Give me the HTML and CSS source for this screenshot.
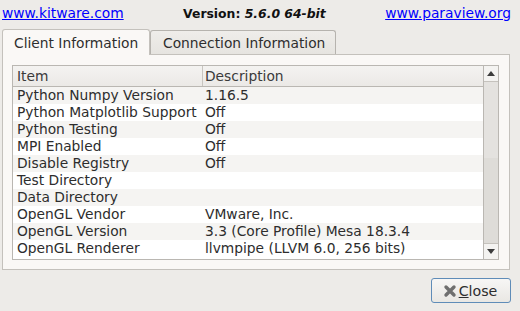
FILE: index.html
```html
<!DOCTYPE html>
<html lang="en">

<head>
    <meta charset="UTF-8">
    <meta name="viewport" content="width=device-width, initial-scale=1.0">
    <title>About ParaView</title>
    <link rel="stylesheet" href="styles.css">
</head>

<body>
    <div class="top-bar">
        <a href="#" class="link">www.kitware.com</a>
        <span class="version">Version: <em>5.6.0 64-bit</em></span>
        <a href="#" class="link">www.paraview.org</a>
    </div>

    <div class="tabs">
        <div class="tab active">Client Information</div>
        <div class="tab">Connection Information</div>
    </div>

    <div class="panel">
        <div class="info-table">
            <div class="table-main">
                <div class="row header">
                    <div class="cell item">Item</div>
                    <div class="cell desc">Description</div>
                </div>
                <div class="row alt"><div class="cell item">Python Numpy Version</div><div class="cell desc">1.16.5</div></div>
                <div class="row"><div class="cell item">Python Matplotlib Support</div><div class="cell desc">Off</div></div>
                <div class="row alt"><div class="cell item">Python Testing</div><div class="cell desc">Off</div></div>
                <div class="row"><div class="cell item">MPI Enabled</div><div class="cell desc">Off</div></div>
                <div class="row alt"><div class="cell item">Disable Registry</div><div class="cell desc">Off</div></div>
                <div class="row"><div class="cell item">Test Directory</div><div class="cell desc"></div></div>
                <div class="row alt"><div class="cell item">Data Directory</div><div class="cell desc"></div></div>
                <div class="row"><div class="cell item">OpenGL Vendor</div><div class="cell desc">VMware, Inc.</div></div>
                <div class="row alt"><div class="cell item">OpenGL Version</div><div class="cell desc">3.3 (Core Profile) Mesa 18.3.4</div></div>
                <div class="row"><div class="cell item">OpenGL Renderer</div><div class="cell desc">llvmpipe (LLVM 6.0, 256 bits)</div></div>
            </div>
            <div class="scrollbar">
                <div class="scroll-btn"><span class="arrow up"></span></div>
                <div class="trough"><div class="thumb"></div></div>
                <div class="scroll-btn"><span class="arrow down"></span></div>
            </div>
        </div>
    </div>

    <div class="button-row">
        <button class="close-btn">
            <svg width="14" height="14" viewBox="0 0 14 14">
                <path d="M3 3 L11 11 M11 3 L3 11" stroke="#6f6f6f" stroke-width="3.4" stroke-linecap="round"/>
            </svg>
            <span><u>C</u>lose</span>
        </button>
    </div>
</body>

</html>
```

FILE: styles.css
```css
body {
    font-family: 'DejaVu Sans', 'Open Sans', sans-serif;
    font-size: 13.8px;
    background-color: #edebe8;
    color: #3c3c3c;
    margin: 0;
    padding: 0;
    width: 520px;
    height: 311px;
    overflow: hidden;
}

.top-bar {
    display: flex;
    justify-content: space-between;
    align-items: center;
    height: 26px;
    padding: 0 9px 0 2px;
}

.link {
    color: #0000ff;
    text-decoration: underline;
}

.version {
    font-weight: bold;
    font-size: 12.4px;
    color: #111;
}

.version em {
    font-style: italic;
}

.tabs {
    display: flex;
    align-items: flex-end;
    padding-left: 2px;
    height: 28px;
}

.tab {
    box-sizing: border-box;
    height: 24px;
    display: flex;
    align-items: center;
    border: 1px solid #b6b3ae;
    border-bottom: none;
    border-radius: 3px 3px 0 0;
    background: linear-gradient(#efedea, #e6e4e0);
    color: #2e2e2e;
}

.tab.active {
    height: 26px;
    width: 148px;
    padding-left: 11px;
    background-color: #faf8f6;
    background-image: none;
    margin-bottom: -1px;
    position: relative;
    z-index: 1;
    border-color: #c4c1bc;
}

.tab:not(.active) {
    width: 186px;
    padding-left: 12px;
}

.panel {
    box-sizing: border-box;
    margin-left: 2px;
    width: 508px;
    height: 216px;
    background-color: #faf8f6;
    border: 1px solid #c4c1bc;
    padding: 10px 10px 0 9px;
}

.info-table {
    box-sizing: border-box;
    display: flex;
    height: 195px;
    border: 1px solid #bab7b2;
    background-color: #ffffff;
}

.table-main {
    flex: 1;
}

.row {
    display: flex;
    height: 17px;
    line-height: 17px;
    align-items: center;
    color: #2d2d2d;
}

.row.alt {
    background-color: #f5f4f2;
}

.row.header {
    height: 20px;
    line-height: 20px;
    border-bottom: 1px solid #bab7b2;
    background: linear-gradient(#f4f3f1, #ebe9e6);
    color: #3a3a3a;
}

.cell {
    white-space: nowrap;
}

.item {
    width: 189px;
    box-sizing: border-box;
    padding-left: 4px;
}

.desc {
    padding-left: 3px;
}

.header .desc {
    border-left: 1px solid #c8c5c0;
    height: 100%;
    padding-left: 2px;
}

.scrollbar {
    width: 14px;
    display: flex;
    flex-direction: column;
    border-left: 1px solid #bab7b2;
    background-color: #f5f4f2;
}

.scroll-btn {
    height: 15px;
    display: flex;
    align-items: center;
    justify-content: center;
    background-color: #f4f3f1;
}

.trough {
    flex: 1;
    background-color: #dedcd8;
    border-top: 1px solid #c5c2bd;
    border-bottom: 1px solid #c5c2bd;
}

.thumb {
    height: 76px;
    background-color: #e4e2df;
}

.arrow {
    width: 0;
    height: 0;
    border-left: 4px solid transparent;
    border-right: 4px solid transparent;
}

.arrow.up {
    border-bottom: 5px solid #3c3c3c;
}

.arrow.down {
    border-top: 5px solid #3c3c3c;
}

.button-row {
    display: flex;
    justify-content: flex-end;
    padding: 8px 9px 0 0;
}

.close-btn {
    box-sizing: border-box;
    width: 80px;
    height: 25px;
    display: flex;
    align-items: center;
    justify-content: center;
    gap: 2px;
    font-family: inherit;
    font-size: 14.2px;
    color: #2d2d2d;
    border: 1px solid #5f8cb8;
    border-radius: 3px;
    background: linear-gradient(#f7f6f5, #e9e7e3);
    padding: 0 6px 0 4px;
}
```
